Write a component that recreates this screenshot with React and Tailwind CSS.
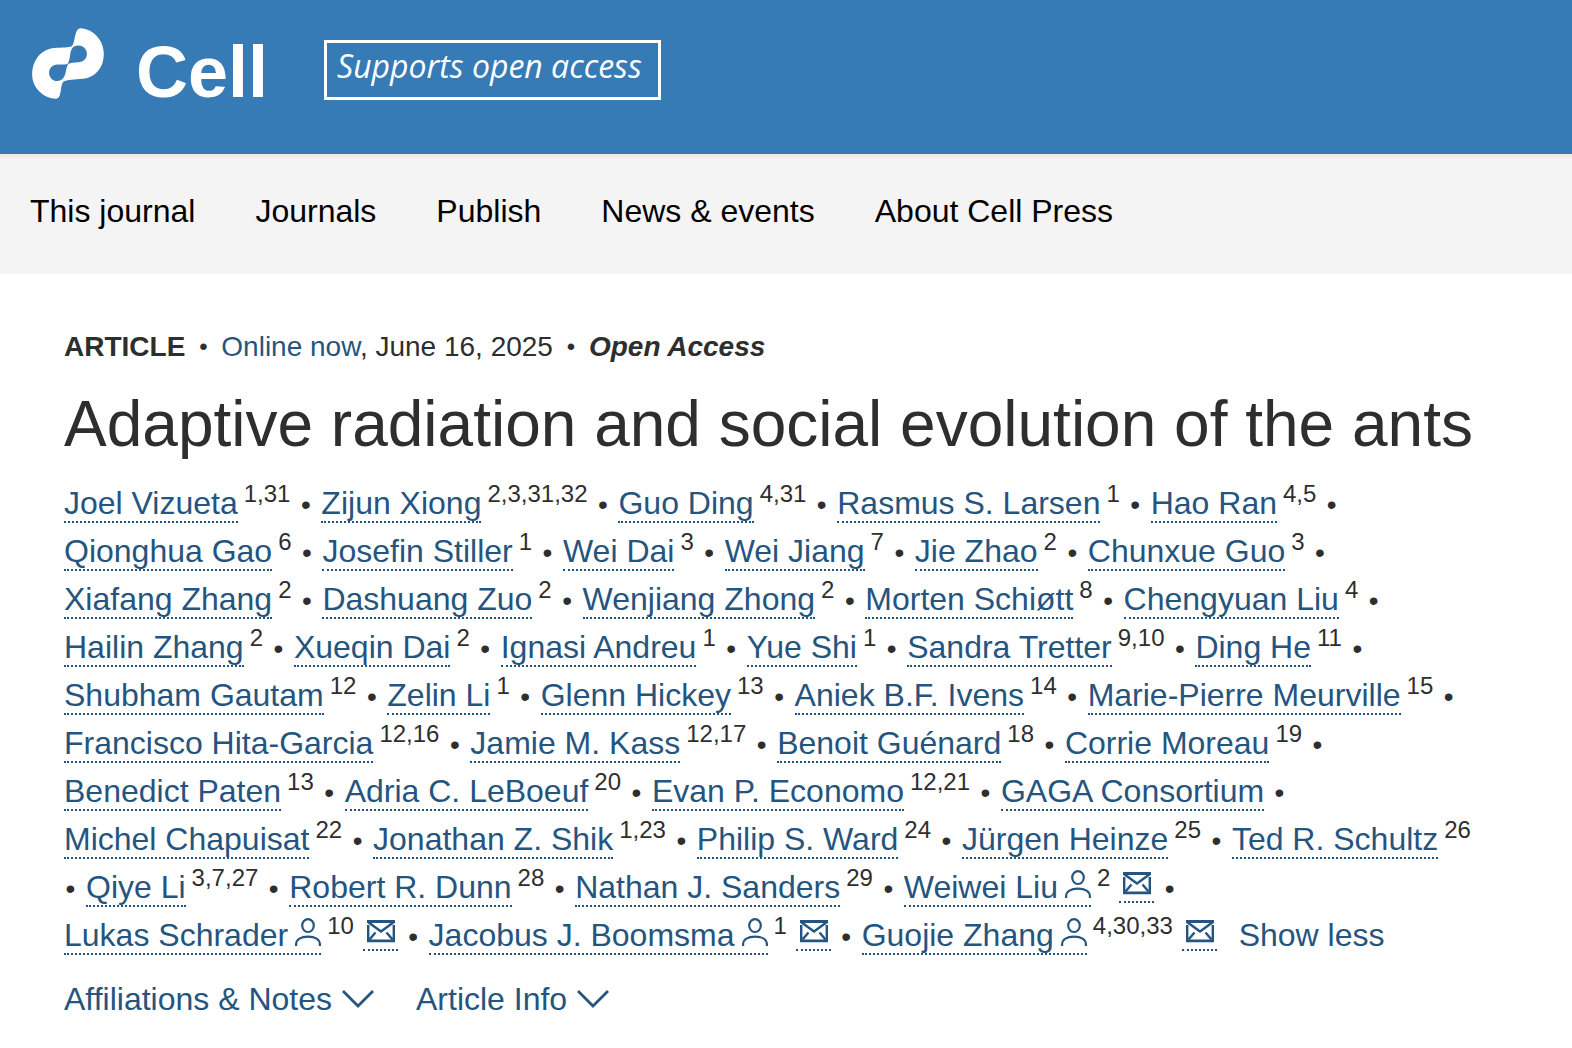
const authors = [
  ['Joel Vizueta', '1,31'], ['Zijun Xiong', '2,3,31,32'], ['Guo Ding', '4,31'],
  ['Rasmus S. Larsen', '1'], ['Hao Ran', '4,5'], ['Qionghua Gao', '6'],
  ['Josefin Stiller', '1'], ['Wei Dai', '3'], ['Wei Jiang', '7'], ['Jie Zhao', '2'],
  ['Chunxue Guo', '3'], ['Xiafang Zhang', '2'], ['Dashuang Zuo', '2'],
  ['Wenjiang Zhong', '2'], ['Morten Schiøtt', '8'], ['Chengyuan Liu', '4'],
  ['Hailin Zhang', '2'], ['Xueqin Dai', '2'], ['Ignasi Andreu', '1'], ['Yue Shi', '1'],
  ['Sandra Tretter', '9,10'], ['Ding He', '11'], ['Shubham Gautam', '12'],
  ['Zelin Li', '1'], ['Glenn Hickey', '13'], ['Aniek B.F. Ivens', '14'],
  ['Marie-Pierre Meurville', '15'], ['Francisco Hita-Garcia', '12,16'],
  ['Jamie M. Kass', '12,17'], ['Benoit Guénard', '18'], ['Corrie Moreau', '19'],
  ['Benedict Paten', '13'], ['Adria C. LeBoeuf', '20'], ['Evan P. Economo', '12,21'],
  ['GAGA Consortium', ''], ['Michel Chapuisat', '22'], ['Jonathan Z. Shik', '1,23'],
  ['Philip S. Ward', '24'], ['Jürgen Heinze', '25'], ['Ted R. Schultz', '26'],
  ['Qiye Li', '3,7,27'], ['Robert R. Dunn', '28'], ['Nathan J. Sanders', '29'],
  ['Weiwei Liu', '2', true], ['Lukas Schrader', '10', true],
  ['Jacobus J. Boomsma', '1', true], ['Guojie Zhang', '4,30,33', true],
];

const navItems = ['This journal', 'Journals', 'Publish', 'News & events', 'About Cell Press'];

function LogoMark() {
  return (
    <svg viewBox="12 12 216 214" className="h-[71px] w-[72px]" fill="#fff" aria-hidden="true">
      <path
        fillRule="evenodd"
        d="M158 13C196 15 228 49 228 90C228 132 202 160 166 165C140 168 116 167 106 174C96 184 102 225 84 225C46 225 12 192 12 153C12 110 38 76 78 72C104 70 122 72 132 66C143 56 138 14 158 13ZM152 65C166 65 177 76 177 90C177 104 166 114 152 115C138 116 128 116 120 121C114 132 114 150 108 160C103 168 96 172 87 172C74 172 63 161 63 147C63 133 74 123 88 122C102 121 114 124 120 119C127 106 125 88 131 76C135 68 142 65 152 65Z"
      />
    </svg>
  );
}

function PersonIcon() {
  return (
    <svg viewBox="0 0 26 28" className="ml-[7px] inline h-[28px] w-[26px] align-baseline" fill="none" stroke="currentColor" strokeWidth="2.2" aria-hidden="true">
      <ellipse cx="13" cy="7.6" rx="5.8" ry="6.4" />
      <path d="M1.1 28V26.5C1.1 21.5 6 18.6 13 18.6S24.900 21.5 24.900 26.5V28" />
    </svg>
  );
}

function MailIcon() {
  return (
    <svg viewBox="0 0 35 27" className="inline h-[27px] w-[35px] align-baseline" fill="none" stroke="currentColor" strokeWidth="2.4" aria-hidden="true">
      <path d="M4 2.500H32M4 21.800H32" strokeWidth="2.8" />
      <path d="M5.200 6V22M30.800 6V22" />
      <path d="M5 3L18 12.500L31 3M6.500 20.500L12.500 13.500M29.500 20.500L23.500 13.500" />
    </svg>
  );
}

function Chevron() {
  return (
    <svg viewBox="0 0 32 18" className="h-[18px] w-[32px]" fill="none" stroke="currentColor" strokeWidth="2.8" aria-hidden="true">
      <path d="M1 1L16 16L31 1" />
    </svg>
  );
}

function Author({ name, notes, contact }) {
  return (
    <span className="whitespace-nowrap">
      <a href="#author" className="border-b-2 border-dotted border-[#25557f] text-[#25557f]">
        {name}
        {contact && <PersonIcon />}
      </a>
      {notes && <sup className="ml-[6px]">{notes}</sup>}
      {contact && (
        <>
          {' '}
          <a href="#mail" aria-label={`Email ${name}`} className="border-b-2 border-dotted border-[#25557f] text-[12px] leading-none text-[#25557f]">
            <MailIcon />
          </a>
        </>
      )}
    </span>
  );
}

export default function App() {
  return (
    <div className="min-h-screen bg-white font-['Liberation_Sans',Arial,sans-serif] text-[32px] leading-[48px] text-[#2e2e2e]">
      <header>
        <div className="flex h-[154px] items-start bg-[#367ab6] pl-8 text-white">
          <a href="#home" className="mt-7 flex items-start gap-8" aria-label="Cell">
            <LogoMark />
            <span className="pt-2 text-[72px] leading-[72px] font-bold">Cell</span>
          </a>
          <div className="mt-10 ml-14 flex h-[60px] items-center border-[3px] border-white pr-4 pb-2 pl-[10px] font-['Open_Sans','Noto_Sans',sans-serif] text-[32px] whitespace-nowrap italic">
            Supports open access
          </div>
        </div>
        <nav className="flex flex-wrap gap-x-[60px] border-t-4 border-[#ebebeb] bg-[#f4f4f4] px-[30px] pt-[29px] pb-[39px] text-black">
          {navItems.map((item) => (
            <a key={item} href="#nav">{item}</a>
          ))}
        </nav>
      </header>

      <main className="pt-[53px] pr-24 pl-16">
        <div className="flex flex-wrap items-center gap-3 text-[28px] leading-[40px]">
          <strong>ARTICLE</strong>
          <span className="w-3 text-center text-[24px]">•</span>
          <span><a href="#online" className="text-[#25557f]">Online now</a>, June 16, 2025</span>
          <span className="w-3 text-center text-[24px]">•</span>
          <strong className="italic">Open Access</strong>
        </div>
        <h1 className="mt-[17px] text-[64px] leading-[80px]">
          Adaptive radiation and social evolution of the ants
        </h1>
        <div className="mt-[15px]">
          {authors.map(([name, notes, contact], i) => (
            <span key={name}>
              <Author name={name} notes={notes} contact={contact} />
              {i < authors.length - 1 && (
                <>
                  {' '}
                  <span className="mr-[9px] inline-block w-[13px] text-center text-[28px] leading-none">•</span>
                </>
              )}
            </span>
          ))}{' '}
          <button type="button" className="ml-[13px] text-[#25557f]">Show less</button>
        </div>
        <div className="mt-4 flex flex-wrap gap-x-[42px] text-[#25557f]">
          <button type="button" className="flex items-center gap-[10px]">Affiliations &amp; Notes <Chevron /></button>
          <button type="button" className="flex items-center gap-[10px]">Article Info <Chevron /></button>
        </div>
      </main>
    </div>
  );
}
